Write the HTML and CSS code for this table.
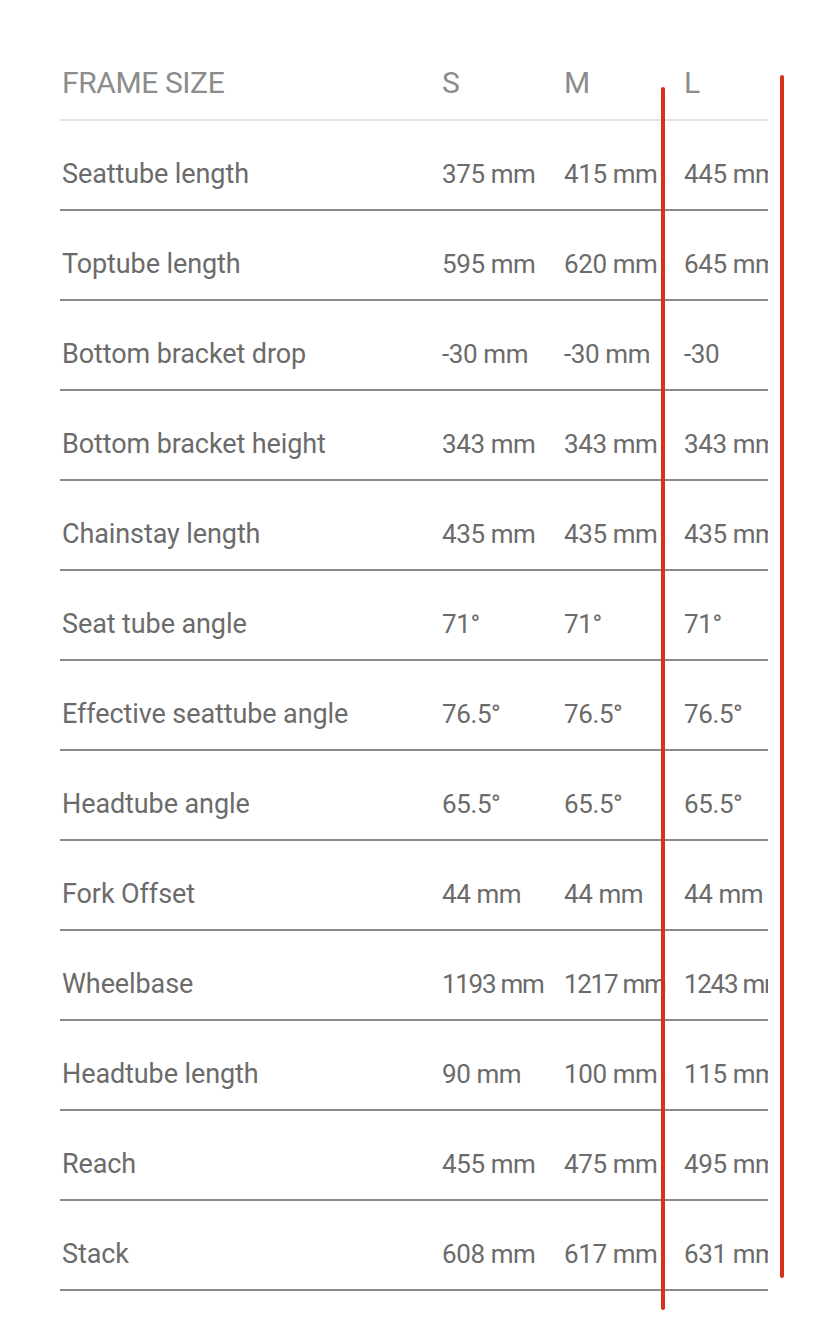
FILE: index.html
```html
<!DOCTYPE html>
<html lang="en">
<head>
<meta charset="utf-8">
<title>Frame geometry</title>
<link rel="stylesheet" href="styles.css">
</head>
<body>
<div class="page">
  <div class="geo">
    <div class="row head"><div class="cell label">FRAME SIZE</div><div class="cell">S</div><div class="cell">M</div><div class="cell">L</div></div>
    <div class="row"><div class="cell label">Seattube length</div><div class="cell">375 mm</div><div class="cell">415 mm</div><div class="cell">445 mm</div></div>
    <div class="row"><div class="cell label">Toptube length</div><div class="cell">595 mm</div><div class="cell">620 mm</div><div class="cell">645 mm</div></div>
    <div class="row"><div class="cell label">Bottom bracket drop</div><div class="cell">-30 mm</div><div class="cell">-30 mm</div><div class="cell">-30</div></div>
    <div class="row"><div class="cell label">Bottom bracket height</div><div class="cell">343 mm</div><div class="cell">343 mm</div><div class="cell">343 mm</div></div>
    <div class="row"><div class="cell label">Chainstay length</div><div class="cell">435 mm</div><div class="cell">435 mm</div><div class="cell">435 mm</div></div>
    <div class="row"><div class="cell label">Seat tube angle</div><div class="cell">71°</div><div class="cell">71°</div><div class="cell">71°</div></div>
    <div class="row"><div class="cell label">Effective seattube angle</div><div class="cell">76.5°</div><div class="cell">76.5°</div><div class="cell">76.5°</div></div>
    <div class="row"><div class="cell label">Headtube angle</div><div class="cell">65.5°</div><div class="cell">65.5°</div><div class="cell">65.5°</div></div>
    <div class="row"><div class="cell label">Fork Offset</div><div class="cell">44 mm</div><div class="cell">44 mm</div><div class="cell">44 mm</div></div>
    <div class="row"><div class="cell label">Wheelbase</div><div class="cell tight">1193 mm</div><div class="cell tight">1217 mm</div><div class="cell tight">1243 mm</div></div>
    <div class="row"><div class="cell label">Headtube length</div><div class="cell">90 mm</div><div class="cell">100 mm</div><div class="cell">115 mm</div></div>
    <div class="row"><div class="cell label">Reach</div><div class="cell">455 mm</div><div class="cell">475 mm</div><div class="cell">495 mm</div></div>
    <div class="row"><div class="cell label">Stack</div><div class="cell">608 mm</div><div class="cell">617 mm</div><div class="cell">631 mm</div></div>
  </div>
  <div class="mark mark-a"></div>
  <div class="mark mark-b"></div>
</div>
</body>
</html>
```

FILE: styles.css
```css
* { box-sizing: border-box; }
html, body { margin: 0; padding: 0; background: #fff; }
body { font-family: Roboto, "Liberation Sans", sans-serif; }
.page { position: relative; width: 828px; min-height: 1331px; padding-left: 60px; }
.geo { width: 708px; overflow: hidden; }
.row {
  display: grid;
  grid-template-columns: 380px 122px 120px 86px;
  height: 90px;
  padding-top: 38px;
  border-bottom: 2px solid #8a8a8a;
  color: #6b6b6b;
  font-size: 26px;
  line-height: 30px;
  letter-spacing: -0.4px;
}
.row.head {
  height: 121px;
  padding-top: 68px;
  border-bottom: 2px solid #e2e2e2;
  color: #8c8c8c;
  font-size: 30px;
  letter-spacing: -0.4px;
}
.row .label { font-size: 27px; letter-spacing: -0.1px; }
.row.head .label { font-size: 30px; letter-spacing: -0.4px; }
.cell { padding-left: 2px; white-space: nowrap; }
.cell.tight { letter-spacing: -1.3px; }
.mark { position: absolute; width: 4px; background: #d8301a; border-radius: 2px; }
.mark-a { left: 661px; top: 87px; height: 1223px; }
.mark-b { left: 780px; top: 75px; height: 1203px; }
```
